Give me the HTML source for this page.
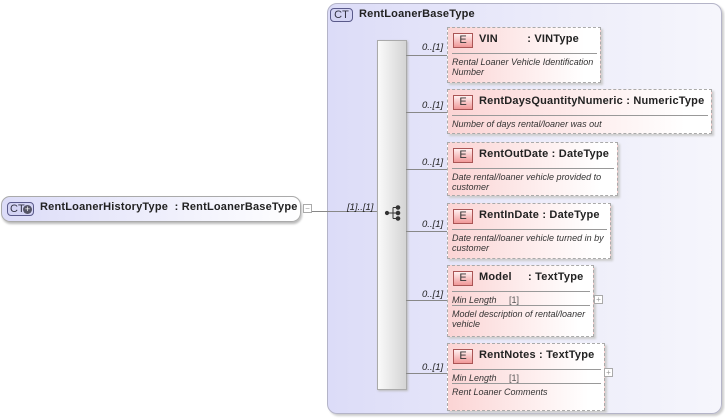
<!DOCTYPE html>
<html><head><meta charset="utf-8"><style>
*{margin:0;padding:0;box-sizing:border-box}
body{width:725px;height:418px;background:#fff;position:relative;overflow:hidden;font-family:"Liberation Sans",sans-serif;color:#222}
.a{position:absolute}
.cont{left:327px;top:3px;width:395px;height:411px;border:1px solid #b4b4c8;border-radius:10px;background:linear-gradient(90deg,#dcdcf8,#ededfa 60%,#f6f6fc);box-shadow:2px 2px 2px #ccc}
.ct{border:1px solid #5a5a8a;border-radius:4px;background:#d4d4f4;font-size:11px;color:#334;text-align:center;line-height:13px}
.b{font-weight:bold;font-size:11px;white-space:nowrap;letter-spacing:0.2px}
.el{border:1px dashed #aaa;background:linear-gradient(90deg,#fbd4d4,#fff 90%);box-shadow:2px 2px 2px #ccc}
.E{left:5px;top:5px;width:20px;height:15px;border:1px solid #a55;background:linear-gradient(#fff0f0,#f09898);font-size:11px;text-align:center;line-height:13px;color:#333}
.nm{left:31px;top:5px;font-weight:bold;font-size:11px;white-space:nowrap;line-height:13px;letter-spacing:0.2px}
.sep{left:4px;right:3px;height:1px;background:#999}
.d{left:4px;font-style:italic;font-size:9px;line-height:10px;color:#333;white-space:nowrap}
.ln{height:1px;background:#888}
.m{font-style:italic;font-size:9.5px;color:#222}
.pl{width:9px;height:9px;border:1px solid #aaa;background:#fff;font-size:8px;line-height:7px;text-align:center;color:#999}
</style></head><body>
<div class="a cont"></div>
<div class="a ct" style="left:330px;top:8px;width:23px;height:14px">CT</div>
<div class="a b" style="left:359px;top:8px">RentLoanerBaseType</div>

<div class="a" style="left:1px;top:196px;width:300px;height:26px;border:1px solid #aaa;border-radius:9px;background:linear-gradient(90deg,#dcdcf8,#fff);box-shadow:1px 2px 2px #bbb"></div>
<div class="a ct" style="left:7px;top:202px;width:27px;height:14px;text-align:left;padding-left:2px">CT<span style="position:absolute;left:15px;top:2px;width:9px;height:9px;border-radius:50%;background:#556;color:#fff;font-size:9px;line-height:9px;text-align:center">+</span></div>
<div class="a b" style="left:40px;top:201px">RentLoanerHistoryType&nbsp;&nbsp;:&nbsp;RentLoanerBaseType</div>
<div class="a pl" style="left:303px;top:204px;">−</div>
<div class="a ln" style="left:312px;top:211px;width:65px"></div>
<div class="a m" style="left:347px;top:202px">[1]..[1]</div>

<div class="a" style="left:377px;top:40px;width:30px;height:350px;border:1px solid #aaa;background:linear-gradient(90deg,#fafafa,#d4d4d4);box-shadow:1px 1px 2px #bbb"></div>
<svg class="a" style="left:384px;top:204px" width="18" height="18"><g fill="#333" stroke="#333"><circle cx="3" cy="9" r="1.6"/><line x1="3" y1="9" x2="9" y2="9"/><line x1="9" y1="3.5" x2="9" y2="14.5"/><line x1="9" y1="3.5" x2="13" y2="3.5"/><line x1="9" y1="9" x2="13" y2="9"/><line x1="9" y1="14.5" x2="13" y2="14.5"/><circle cx="14" cy="3.5" r="1.8"/><circle cx="14" cy="9" r="1.8"/><circle cx="14" cy="14.5" r="1.8"/></g></svg>

<div class="a ln" style="left:406px;top:55px;width:42px"></div><div class="a m" style="left:422px;top:42px">0..[1]</div>
<div class="a ln" style="left:406px;top:112px;width:42px"></div><div class="a m" style="left:422px;top:100px">0..[1]</div>
<div class="a ln" style="left:406px;top:169px;width:42px"></div><div class="a m" style="left:422px;top:157px">0..[1]</div>
<div class="a ln" style="left:406px;top:231px;width:42px"></div><div class="a m" style="left:422px;top:219px">0..[1]</div>
<div class="a ln" style="left:406px;top:300px;width:42px"></div><div class="a m" style="left:422px;top:289px">0..[1]</div>
<div class="a ln" style="left:406px;top:373px;width:42px"></div><div class="a m" style="left:422px;top:362px">0..[1]</div>

<div class="a el" style="left:447px;top:27px;width:154px;height:56px">
<div class="a E">E</div><div class="a nm">VIN&nbsp;&nbsp;&nbsp;&nbsp;&nbsp;&nbsp;&nbsp;&nbsp;&nbsp;: VINType</div>
<div class="a sep" style="top:25px"></div>
<div class="a d" style="top:29px">Rental Loaner Vehicle Identification<br>Number</div></div>

<div class="a el" style="left:447px;top:89px;width:265px;height:45px">
<div class="a E">E</div><div class="a nm">RentDaysQuantityNumeric&nbsp;: NumericType</div>
<div class="a sep" style="top:25px"></div>
<div class="a d" style="top:29px">Number of days rental/loaner was out</div></div>

<div class="a el" style="left:447px;top:142px;width:171px;height:54px">
<div class="a E">E</div><div class="a nm">RentOutDate&nbsp;: DateType</div>
<div class="a sep" style="top:25px"></div>
<div class="a d" style="top:29px">Date rental/loaner vehicle provided to<br>customer</div></div>

<div class="a el" style="left:447px;top:203px;width:164px;height:56px">
<div class="a E">E</div><div class="a nm">RentInDate&nbsp;: DateType</div>
<div class="a sep" style="top:25px"></div>
<div class="a d" style="top:29px">Date rental/loaner vehicle turned in by<br>customer</div></div>

<div class="a el" style="left:447px;top:265px;width:147px;height:72px">
<div class="a E">E</div><div class="a nm">Model&nbsp;&nbsp;&nbsp;&nbsp;&nbsp;: TextType</div>
<div class="a sep" style="top:25px"></div>
<div class="a d" style="top:29px">Min Length&nbsp;&nbsp;&nbsp;&nbsp; <span style="font-style:normal;color:#555">[1]</span></div>
<div class="a sep" style="top:39px"></div>
<div class="a d" style="top:43px">Model description of rental/loaner<br>vehicle</div></div>
<div class="a pl" style="left:594px;top:295px">+</div>

<div class="a el" style="left:447px;top:343px;width:158px;height:68px">
<div class="a E">E</div><div class="a nm">RentNotes&nbsp;: TextType</div>
<div class="a sep" style="top:25px"></div>
<div class="a d" style="top:29px">Min Length&nbsp;&nbsp;&nbsp;&nbsp; <span style="font-style:normal;color:#555">[1]</span></div>
<div class="a sep" style="top:39px"></div>
<div class="a d" style="top:43px">Rent Loaner Comments</div></div>
<div class="a pl" style="left:604px;top:368px">+</div>
</body></html>
